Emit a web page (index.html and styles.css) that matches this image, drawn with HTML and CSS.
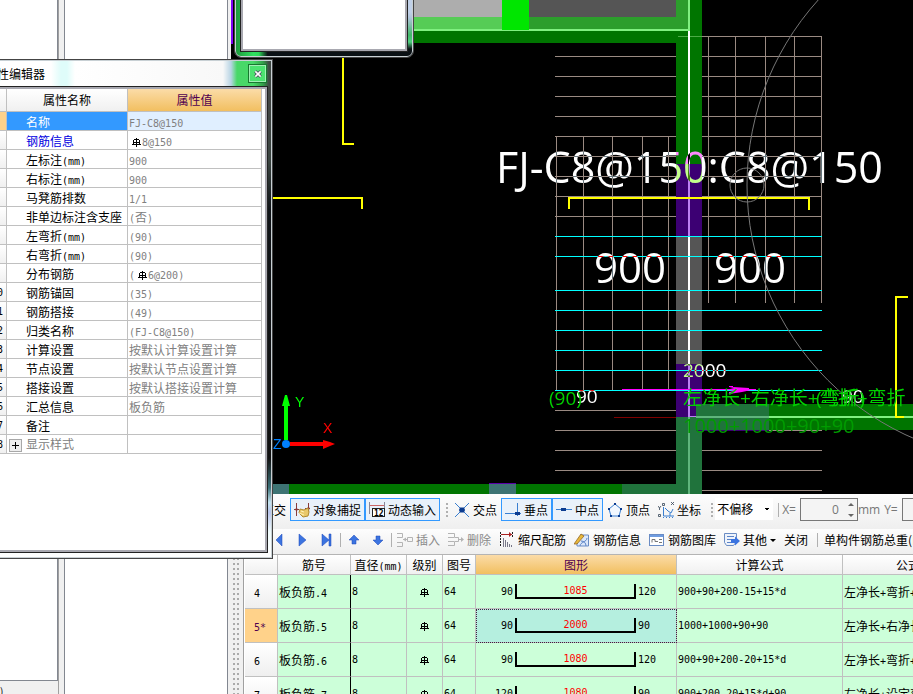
FILE: index.html
```html
<!DOCTYPE html>
<html lang="zh-CN">
<head>
    <meta charset="UTF-8">
    <meta name="viewport" content="width=device-width, initial-scale=1.0">
    <title>属性编辑器</title>
    <link rel="stylesheet" href="styles.css">
</head>
<body>
    <svg class="defs" aria-hidden="true">
        <symbol id="rebar" viewBox="0 0 9 9">
            <path d="M4.500 0v9M2 1.500h5M1.500 2v4M7.500 2v4M0 6.500h9M2 4.500h5" fill="none" stroke="currentColor" stroke-width="1"/>
        </symbol>
    </svg>
    <div class="app">
        <div class="left-pane">
            <div class="list-box"></div>
            <div class="pane-status">)</div>
        </div>
        <div class="mid-pane"></div>
        <div class="main">
            <div class="canvas">
                <svg viewBox="231 0 682 494" preserveAspectRatio="xMinYMin slice">
                    <rect x="231" width="682" height="494" fill="#000"/>
                    <rect x="231" y="0" width="2" height="44" fill="#7d00f5"/>
                    <!-- slab edges -->
                    <rect x="413" y="0" width="89" height="17" fill="#adadad"/>
                    <rect x="413" y="17" width="89" height="12" fill="#56cc56"/>
                    <rect x="529" y="0" width="147" height="17" fill="#555"/>
                    <rect x="529" y="17" width="147" height="12" fill="#2c9e2c"/>
                    <rect x="413" y="31" width="263" height="12" fill="#007500"/>
                    <!-- rebar grid -->
                    <path class="bar" d="M678 36.500H822M555 56.500H822M555 76.500H822M555 96.500H822M555 116.500H822M555 136.500H822M555 156.500H822M555 176.500H822M555 196.500H822M555 216.500H822M555 410.500H822M555 430.500H822M555 450.500H822M555 470.500H822M678 490.500H822"/>
                    <path class="bar" d="M556.500 136V390M583.500 136V390M612.500 136V390M642.500 136V390M668.500 136V390M708.500 36V303M735.500 36V303M765.500 36V303M794.500 36V303M821.500 36V303"/>
                    <path class="thin" d="M614 417.500H678" stroke="#800000"/>
                    <!-- beam axis column -->
                    <rect x="676" y="0" width="26" height="164" fill="#007500"/>
                    <rect x="676" y="0" width="12" height="29" fill="#2c9e2c"/>
                    <rect x="676" y="164" width="26" height="73" fill="#3c0073"/>
                    <rect x="676" y="237" width="26" height="127" fill="#555"/>
                    <rect x="676" y="364" width="26" height="53" fill="#3c0073"/>
                    <rect x="676" y="417" width="26" height="77" fill="#20733c"/>
                    <path class="thin" d="M678 36.500H702" stroke="#4cab46"/>
                    <rect x="696" y="404" width="73" height="26" fill="#20733c"/>
                    <rect x="696" y="430" width="73" height="1" fill="#3c0073"/>
                    <rect x="769" y="404" width="144" height="26" fill="#007500"/>
                    <rect x="413" y="29" width="276" height="2" fill="#80f080"/>
                    <rect x="502" y="0" width="27" height="30" fill="#00e600"/>
                    <rect x="688" y="0" width="2" height="31" fill="#80f080"/>
                    <rect x="688" y="31" width="2" height="133" fill="#fff"/>
                    <rect x="688" y="164" width="2" height="73" fill="#bc80f3"/>
                    <rect x="688" y="237" width="2" height="127" fill="#fff"/>
                    <rect x="688" y="364" width="2" height="53" fill="#bc80f3"/>
                    <rect x="690" y="416" width="6" height="1" fill="#bc80f3"/>
                    <rect x="688" y="417" width="2" height="77" fill="#5fb57c"/>
                    <rect x="696" y="416" width="73" height="2" fill="#5fb57c"/>
                    <rect x="769" y="416" width="144" height="2" fill="#80f080"/>
                    <path class="thin" d="M555 236.500H822M555 256.500H822M555 290.500H822M555 310.500H822M555 330.500H822M555 350.500H822M555 370.500H822M555 390.500H822" stroke="#0ff"/>
                    <!-- lower slab edge -->
                    <rect x="231" y="484" width="445" height="10" fill="#007500"/>
                    <rect x="231" y="484" width="58" height="10" fill="#3d7373"/>
                    <rect x="489" y="484" width="27" height="10" fill="#3d7373"/>
                    <rect x="489" y="483" width="27" height="1" fill="#5a00a8"/>
                    <rect x="622" y="484" width="54" height="10" fill="#20733c"/>
                    <path class="mark" d="M343 50V144H354M240 198H362V209M569 209V198H809V210M908 297H896V417H904"/>
                    <circle class="arc" cx="1023" cy="185" r="276"/>
                    <circle class="arc" cx="747" cy="185" r="17"/>
                    <path class="thin" d="M622 389.500H756" stroke="#f0f"/>
                    <path d="M729 386h4v1l16 1v1h7l-14 3-13 2v-2l5-1-4-1v-1l4-1-5-1z" fill="#f0f"/>
                    <g class="dims">
                        <text x="496" y="183" class="title">FJ-C8@150:C8@150</text>
                        <text x="594" y="283" class="big">900</text>
                        <text x="714" y="283" class="big">900</text>
                        <text x="683" y="377">2000</text>
                        <text x="576" y="403">90</text>
                        <text x="842" y="403">90</text>
                    </g>
                    <g class="notes">
                        <text x="549" y="405">(90)</text>
                        <text x="683" y="405">左净长+右净长+弯折+弯折</text>
                        <text x="816" y="405">(弯折)</text>
                        <text x="683" y="433" class="sum">1000+1000+90+90</text>
                    </g>
                    <!-- coordinate axes -->
                    <path d="M284 440V406h-2l3-11h2l3 11h-2v34z" fill="#0f0"/>
                    <path d="M290 442h33v-2l7 2 5 2-5 2-7 3v-3h-33z" fill="#f00"/>
                    <circle cx="286" cy="444" r="4" fill="#0080ff"/>
                    <text class="axis" x="295" y="407" fill="#0f0">Y</text>
                    <text class="axis" x="323" y="433" fill="#f00">X</text>
                    <text class="axis" x="273" y="449" fill="#0080ff">Z</text>
                </svg>
            </div>
            <div class="toolbar snap-bar">
                <button>正交</button>
                <button class="on">
                    <svg viewBox="0 0 16 16"><path d="M2.500 1v13M14.500 1v9M0 7.500h5M11 6.500h5" stroke="#8a3b3b" fill="none"/><path d="M1 7.500l1.500-2L4 7.500l-1.500 2zM13 6.500l1.500-2 1.500 2-1.500 2z" fill="#8a3b3b"/><path d="M6 7l4 1 4-2 1 4-1 4-5 1-4-4z" fill="#e9c86a" stroke="#b08a30"/><path d="M7 9l3 1M5 11l5 2" stroke="#fff2b8"/></svg>
                    对象捕捉
                </button>
                <button class="on">
                    <svg viewBox="0 0 16 16"><path d="M.5 0v12M15.500 0v6" stroke="#889"/><path d="M1 3.500h14" stroke="#c66"/><rect x="3.500" y="6.500" width="12" height="8" fill="#fff" stroke="#222"/><text x="5" y="14" font-size="8" font-family="DejaVu Sans Mono" font-weight="bold">12</text></svg>
                    动态输入
                </button>
                <span class="grip"></span>
                <button>
                    <svg viewBox="0 0 16 16"><path d="M1 1l5 5M15 1l-5 5M1 15l5-5M15 15l-5-5" stroke="#3a7fd0" fill="none"/><path d="M6 5.500h4L11 8l-1 2.500H6L5 8z" fill="#0c3c90"/></svg>
                    交点
                </button>
                <button class="on">
                    <svg viewBox="0 0 16 16"><path d="M12.500 1v13M0 11.500h16" stroke="#3a7fd0" fill="none"/><rect x="10" y="10" width="5" height="3" fill="#0c3c90"/></svg>
                    垂点
                </button>
                <button class="on">
                    <svg viewBox="0 0 16 16"><path d="M0 7.500h16" stroke="#3a7fd0"/><rect x="5" y="6" width="5" height="3" fill="#0c3c90"/></svg>
                    中点
                </button>
                <button>
                    <svg viewBox="0 0 16 16"><path d="M8 2l6 5-2 7H4L2 7z" fill="#f2f8ff" stroke="#3a7fd0"/><path d="M7 1h2v2H7zM1 6h2v2H1zM13 6h2v2h-2zM3 13h2v2H3zM11 13h2v2h-2z" fill="#0c3c90"/></svg>
                    顶点
                </button>
                <button>
                    <svg viewBox="0 0 16 16"><path d="M5.500 5v9H16M7 6l3 3 3 2 2-4M12 11v3" stroke="#3a7fd0" fill="none"/><path d="M4.500 1.500h2v2h-2zM13 0l3 3M16 0l-3 3M0 4l1.500 2L3 4M1.500 6v2M.5 12.500h2v2h-2z" fill="none" stroke="#345" stroke-width=".8"/><path d="M5 15.500h11" stroke="#3a7fd0" stroke-dasharray="1 2"/></svg>
                    坐标
                </button>
                <span class="grip"></span>
                <select aria-label="偏移方式">
                    <option>不偏移</option>
                </select>
                <span class="sep"></span>
                <label class="offset">X= <input type="text" value="0" disabled><span class="spin"></span></label>
                <span class="unit">mm</span>
                <label class="offset">Y= <input type="text" value="0" disabled><span class="spin"></span></label>
            </div>
            <div class="toolbar edit-bar">
                <button aria-label="上一条"><svg viewBox="0 0 16 16"><path d="M11 2v12L5 8z" fill="#3c74e0" stroke="#1b46b8" stroke-width=".5"/></svg></button>
                <button aria-label="下一条"><svg viewBox="0 0 16 16"><path d="M4 2v12l7-6z" fill="#3c74e0" stroke="#1b46b8" stroke-width=".5"/></svg></button>
                <button aria-label="最后一条"><svg viewBox="0 0 16 16"><path d="M3 2v12l7-6zM10 2h2v12h-2z" fill="#3c74e0" stroke="#1b46b8" stroke-width=".5"/></svg></button>
                <span class="sep"></span>
                <button aria-label="上移"><svg viewBox="0 0 16 16"><path d="M8 3l5 5h-3v4H6V8H3z" fill="#3c74e0" stroke="#1b46b8" stroke-width=".5"/></svg></button>
                <button aria-label="下移"><svg viewBox="0 0 16 16"><path d="M8 13L3 8h3V4h4v4h3z" fill="#3c74e0" stroke="#1b46b8" stroke-width=".5"/></svg></button>
                <span class="sep"></span>
                <button disabled>
                    <svg viewBox="0 0 16 16"><path d="M0 1.500h5.500v4H0M0 10.500h5.500v4H0M6 7.500h4M10.500 5.500h5v4h-5z" fill="none" stroke="#b4b4b4"/><path d="M6 7.500l3-2v4z" fill="#b4b4b4"/></svg>
                    插入
                </button>
                <button disabled>
                    <svg viewBox="0 0 16 16"><path d="M0 1.500h6.500v4h4v4h-4v4H0M0 5.500h6M0 9.500h6M10 7.500h5" fill="none" stroke="#b4b4b4"/><path d="M13 5l3 2.500-3 2.500z" fill="#b4b4b4"/></svg>
                    删除
                </button>
                <button>
                    <svg viewBox="0 0 16 16"><path d="M2 2.500h11" stroke="#a22"/><path d="M10 0l3 2.500L10 5z" fill="#a22"/><path d="M1.500 0v15M13.500 0v5" stroke="#222" stroke-dasharray="2 1"/><path d="M4.500 6v9M6.500 8v7M8.500 10v5M10.500 12v3M12.500 13v2" stroke="#778"/></svg>
                    缩尺配筋
                </button>
                <button>
                    <svg viewBox="0 0 16 16"><path d="M6 3h8.500v11H3V9" fill="#dce8fa" stroke="#6a8cc4"/><path d="M6 14c0-4 7-4 7-8M7 9c3 0 5 2 5 5" fill="none" stroke="#5b83c7"/><path d="M0 12L7 2l3 2-7 8z" fill="#e8b93c" stroke="#8a5a1a" stroke-width=".7"/></svg>
                    钢筋信息
                </button>
                <button>
                    <svg viewBox="0 0 16 16"><rect x=".5" y="2.500" width="14" height="11" fill="#fff" stroke="#6a8cc4"/><path d="M1 4h13" stroke="#6f9ce0" stroke-width="2"/><path d="M3 10.500V7.500h3v2h3M10 7.500h3M10 10.500h3" fill="none" stroke="#777"/></svg>
                    钢筋图库
                </button>
                <button>
                    <svg viewBox="0 0 16 16"><path d="M.5 1.500h12v8l-3 4h-7l-2-3z" fill="#eef3fb" stroke="#6a8cc4"/><path d="M3 4.500h7M3 7.500h5M3 10.500h4" stroke="#5b83c7"/><path d="M7 7h4V4.500l5 4.500-5 4.500V11H7z" fill="#3c74e0"/></svg>
                    其他<i class="caret"></i>
                </button>
                <button>关闭</button>
                <span class="sep wide"></span>
                <span class="total">单构件钢筋总重(kg)：</span>
            </div>
            <div class="detail">
                <div class="splitter"></div>
                <div class="grid-wrap">
                    <table class="grid">
                        <colgroup>
                            <col class="c-no"><col class="c-name"><col class="c-dia"><col class="c-grade"><col class="c-fig"><col class="c-shape"><col class="c-expr"><col class="c-desc">
                        </colgroup>
                        <thead>
                            <tr>
                                <th></th>
                                <th>筋号</th>
                                <th>直径<span class="en">(mm)</span></th>
                                <th>级别</th>
                                <th>图号</th>
                                <th class="hot">图形</th>
                                <th>计算公式</th>
                                <th>公式描述</th>
                            </tr>
                        </thead>
                        <tbody>
                            <tr>
                                <th><span class="en">4</span></th>
                                <td class="name">板负筋<span class="en">.4</span></td>
                                <td class="en">8</td>
                                <td class="mid"><svg class="rebar"><use href="#rebar"/></svg></td>
                                <td class="en">64</td>
                                <td><div class="shape en"><span>90</span><b>1085</b><span>120</span></div></td>
                                <td class="en">900+90+200-15+15*d</td>
                                <td>左净长<span class="en">+</span>弯折<span class="en">+</span>锚固</td>
                            </tr>
                            <tr class="current">
                                <th><span class="en">5*</span></th>
                                <td class="name">板负筋<span class="en">.5</span></td>
                                <td class="en">8</td>
                                <td class="mid"><svg class="rebar"><use href="#rebar"/></svg></td>
                                <td class="en">64</td>
                                <td class="focus"><div class="shape en"><span>90</span><b>2000</b><span>90</span></div></td>
                                <td class="en">1000+1000+90+90</td>
                                <td>左净长<span class="en">+</span>右净长<span class="en">+</span>弯折</td>
                            </tr>
                            <tr>
                                <th><span class="en">6</span></th>
                                <td class="name">板负筋<span class="en">.6</span></td>
                                <td class="en">8</td>
                                <td class="mid"><svg class="rebar"><use href="#rebar"/></svg></td>
                                <td class="en">64</td>
                                <td><div class="shape en"><span>90</span><b>1080</b><span>120</span></div></td>
                                <td class="en">900+90+200-20+15*d</td>
                                <td>左净长<span class="en">+</span>弯折<span class="en">+</span>锚固</td>
                            </tr>
                            <tr>
                                <th><span class="en">7</span></th>
                                <td class="name">板负筋<span class="en">.7</span></td>
                                <td class="en">8</td>
                                <td class="mid"><svg class="rebar"><use href="#rebar"/></svg></td>
                                <td class="en">64</td>
                                <td><div class="shape en"><span>120</span><b>1080</b><span>90</span></div></td>
                                <td class="en">900+200-20+15*d+90</td>
                                <td>左净长<span class="en">+</span>设定弯折</td>
                            </tr>
                        </tbody>
                    </table>
                </div>
            </div>
        </div>
    </div>

    <div class="window preview-window">
        <div class="window-body"></div>
    </div>

    <div class="window prop-window">
        <div class="title-bar">
            <span>属性编辑器</span>
            <button class="close" aria-label="关闭"><svg viewBox="0 0 9 9"><path d="M1.500 1.500l6 6M7.500 1.500l-6 6" stroke="#445" stroke-width="3.500"/><path d="M1.500 1.500l6 6M7.500 1.500l-6 6" stroke="#fff" stroke-width="1.800"/></svg></button>
        </div>
        <div class="window-body">
            <table class="props">
                <colgroup><col class="p-no"><col class="p-name"><col class="p-value"></colgroup>
                <thead>
                    <tr><th></th><th>属性名称</th><th class="hot">属性值</th></tr>
                </thead>
                <tbody>
                    <tr class="selected"><th>1</th><td>名称</td><td><span class="en">FJ-C8@150</span></td></tr>
                    <tr class="key"><th>2</th><td>钢筋信息</td><td><svg class="rebar"><use href="#rebar"/></svg><span class="en">8@150</span></td></tr>
                    <tr><th>3</th><td>左标注<span class="en">(mm)</span></td><td><span class="en">900</span></td></tr>
                    <tr><th>4</th><td>右标注<span class="en">(mm)</span></td><td><span class="en">900</span></td></tr>
                    <tr><th>5</th><td>马凳筋排数</td><td><span class="en">1/1</span></td></tr>
                    <tr><th>6</th><td>非单边标注含支座</td><td><span class="en">(</span>否<span class="en">)</span></td></tr>
                    <tr><th>7</th><td>左弯折<span class="en">(mm)</span></td><td><span class="en">(90)</span></td></tr>
                    <tr><th>8</th><td>右弯折<span class="en">(mm)</span></td><td><span class="en">(90)</span></td></tr>
                    <tr><th>9</th><td>分布钢筋</td><td><span class="en">(</span><svg class="rebar"><use href="#rebar"/></svg><span class="en">6@200)</span></td></tr>
                    <tr><th>10</th><td>钢筋锚固</td><td><span class="en">(35)</span></td></tr>
                    <tr><th>11</th><td>钢筋搭接</td><td><span class="en">(49)</span></td></tr>
                    <tr><th>12</th><td>归类名称</td><td><span class="en">(FJ-C8@150)</span></td></tr>
                    <tr><th>13</th><td>计算设置</td><td>按默认计算设置计算</td></tr>
                    <tr><th>14</th><td>节点设置</td><td>按默认节点设置计算</td></tr>
                    <tr><th>15</th><td>搭接设置</td><td>按默认搭接设置计算</td></tr>
                    <tr><th>16</th><td>汇总信息</td><td>板负筋</td></tr>
                    <tr><th>17</th><td>备注</td><td></td></tr>
                    <tr class="group"><th>18</th><td><button class="expand" aria-label="展开"></button>显示样式</td><td></td></tr>
                </tbody>
            </table>
        </div>
    </div>
</body>
</html>
```
FILE: styles.css
```css
* {
    box-sizing: border-box;
}
body {
    margin: 0;
    height: 100vh;
    overflow: hidden;
    background: #f0f0f0;
    color: #000;
    font-family: "Noto Sans CJK SC", sans-serif;
    font-size: 12px;
    line-height: 16px;
}
button, select, input {
    font: inherit;
    color: inherit;
}
.defs {
    position: absolute;
    width: 0;
    height: 0;
}
.en {
    font-family: "DejaVu Sans Mono", monospace;
    font-size: 10px;
}
span.en {
    line-height: 10px;
}
.rebar {
    width: 9px;
    height: 9px;
    color: #000;
}

/* docked panes */
.app {
    display: flex;
    height: 100%;
}
.left-pane {
    width: 59px;
    flex: none;
    display: flex;
    flex-direction: column;
    border-right: 1px solid #a0a0a0;
}
.list-box {
    flex: 1;
    background: #fff;
    border-right: 1px solid #828790;
    border-bottom: 1px solid #828790;
}
.pane-status {
    height: 13px;
    line-height: 20px;
    overflow: hidden;
    font-size: 10px;
}
.mid-pane {
    width: 164px;
    flex: none;
    margin: 0 3px 0 5px;
    background: #fff;
    border-left: 1px solid #828790;
    border-right: 1px solid #828790;
}
.main {
    flex: 1;
    min-width: 0;
    display: flex;
    flex-direction: column;
}

/* drawing area */
.canvas {
    flex: 1;
    min-height: 0;
    background: #000;
    overflow: hidden;
}
.canvas svg {
    display: block;
    width: 100%;
    height: 100%;
    isolation: isolate;
}
.bar, .thin {
    fill: none;
    stroke-width: 1;
}
.bar {
    stroke: #9a8a82;
}
.mark {
    fill: none;
    stroke: #ff0;
    stroke-width: 2;
}
.arc {
    fill: none;
    stroke: #777;
    stroke-width: 1;
}
.dims, .notes {
    font-family: "Open Sans", "Noto Sans CJK SC", sans-serif;
    font-size: 19px;
}
.dims {
    fill: #fff;
    mix-blend-mode: difference;
}
.dims .big {
    font-size: 42px;
}
.dims .title {
    font-size: 43px;
}
.notes {
    fill: #00d000;
}
.notes .sum {
    fill: #009c00;
    font-size: 20px;
}
.axis {
    font-family: "Liberation Sans", sans-serif;
    font-size: 14px;
}

/* toolbars */
.toolbar {
    flex: none;
    display: flex;
    overflow: hidden;
    white-space: nowrap;
    background: linear-gradient(#fdfdfd, #efefef);
}
.snap-bar {
    height: 35px;
    padding: 4px 0 0 27px;
    align-items: flex-start;
}
.edit-bar {
    height: 26px;
    padding: 0 0 3px 36px;
    align-items: center;
    border-bottom: 1px solid #b4b4b4;
}
.toolbar button {
    flex: none;
    display: flex;
    align-items: center;
    gap: 3px;
    height: 23px;
    padding: 0 3px;
    border: 1px solid transparent;
    background: none;
}
.toolbar button.on {
    border-color: #3399ff;
    background: #e9f1fa;
}
.toolbar button:disabled {
    color: #8a8a8a;
}
.toolbar button svg {
    width: 16px;
    height: 16px;
    flex: none;
}
.grip {
    flex: none;
    width: 2px;
    height: 14px;
    margin: 5px 2px 0 6px;
    background: repeating-linear-gradient(#b0b0b0 0 2px, transparent 2px 4px);
}
.sep {
    flex: none;
    width: 1px;
    height: 14px;
    margin: 0 1px;
    background: #b0b0b0;
}
.snap-bar .sep {
    margin: 5px 3px 0 5px;
}
.sep.wide {
    margin: 0 5px;
}
.snap-bar select {
    flex: none;
    width: 58px;
    height: 22px;
    padding: 0 0 0 2px;
    border: 0;
    border-radius: 0;
    appearance: none;
    background: #fff conic-gradient(from -45deg at 50% 3px, #000 90deg, transparent 0) right 3px center / 6px 3px no-repeat;
}
.offset, .unit {
    flex: none;
    display: flex;
    align-items: center;
    gap: 4px;
    height: 23px;
    color: #777;
    font-family: "Open Sans", sans-serif;
}
.unit {
    margin: 0 4px 0 0;
}
.offset input {
    width: 58px;
    height: 23px;
    padding: 0 18px 0 4px;
    border: 1px solid #777;
    background: #f4f4f4;
    text-align: right;
}
.spin {
    display: flex;
    flex-direction: column;
    justify-content: space-between;
    width: 6px;
    height: 14px;
    margin: 0 4px 0 -14px;
}
.spin::before, .spin::after {
    content: "";
    border: 3px solid transparent;
    border-top: 0;
    border-bottom: 3px solid #666;
}
.spin::after {
    border-bottom: 0;
    border-top: 3px solid #666;
}
.caret {
    border: 3px solid transparent;
    border-top-color: #000;
    border-bottom: 0;
}
.total {
    padding-left: 1px;
}

/* rebar detail grid */
.detail {
    flex: none;
    display: flex;
    height: 139px;
}
.splitter {
    flex: none;
    width: 13px;
    border-right: 1px solid #a0a0a0;
    background-image: radial-gradient(circle at 3px 1px, #aaa 1px, transparent 1px), radial-gradient(circle at 7px 1px, #aaa 1px, transparent 1px);
    background-size: 12px 5px;
    background-position: 0 3px;
}
.grid-wrap {
    flex: 1;
    min-width: 0;
    overflow: hidden;
    padding-left: 1px;
    background: #fff;
}
table {
    table-layout: fixed;
    border-spacing: 0;
}
th, td {
    padding: 0 0 0 2px;
    font-weight: normal;
    text-align: left;
    white-space: nowrap;
    overflow: hidden;
    border-right: 1px solid #c0c0c0;
    border-bottom: 1px solid #c0c0c0;
}
thead th {
    padding: 0;
    text-align: center;
    background: linear-gradient(#fff, #f0f0f0);
}
thead th.hot {
    color: #500050;
    background: linear-gradient(#fbdca8, #f2bf60);
}
.grid {
    width: 753px;
}
.c-no { width: 33px; }
.c-name { width: 73px; }
.c-dia { width: 56px; }
.c-grade { width: 36px; }
.c-fig { width: 33px; }
.c-shape { width: 201px; }
.c-expr { width: 166px; }
.c-desc { width: 155px; }
.grid thead th {
    height: 20px;
}
.grid tbody th, .grid tbody td {
    height: 34px;
}
.grid tbody th {
    padding-left: 9px;
    background: linear-gradient(#fff, #efefef);
}
.grid tbody td {
    padding-left: 1px;
    background: #ccffd9;
}
.grid tbody td.name {
    border-right-color: #000;
}
.grid tbody .mid {
    padding: 0;
    text-align: center;
}
.grid .current th {
    color: #500050;
    background: #ffd28a;
}
.grid tbody td.focus {
    background: #b5efdf;
    outline: 1px dotted #402040;
    outline-offset: -1px;
}
.shape {
    display: flex;
    align-items: center;
}
.shape span {
    width: 36px;
    text-align: right;
}
.shape span:last-child {
    text-align: left;
}
.shape b {
    width: 121px;
    height: 15px;
    margin: 0 2px;
    line-height: 14px;
    font-weight: normal;
    text-align: center;
    color: #f00;
    border: 2px solid #000;
    border-top: 0;
}

/* floating windows */
.window {
    position: absolute;
    display: flex;
    flex-direction: column;
    border: 1px solid #c8d0d4;
    outline: 1px solid #444;
}
.window-body {
    flex: 1;
    background: #fff;
    border: 2px solid #a8a8b0;
    outline: 1px solid #222;
}
.preview-window {
    left: 235px;
    top: -120px;
    width: 178px;
    height: 177px;
    padding: 5px;
    border-radius: 6px;
    background: linear-gradient(90deg, #1c9a3c, #30e060 10%, #2cd858 13%, transparent 18%),
        linear-gradient(#c0d0e8 75%, #b0c4dc 78%, #40b868 88%, #50d080 92%, #0a1014 96%);
}
.prop-window {
    left: -24px;
    top: 60px;
    width: 296px;
    height: 498px;
    padding: 0 4px 5px 0;
    background: linear-gradient(#444 0, #3a4440 20%, #101418 30%, #111 80%, #3a7078 86%, #c4e4f0 89%, #b8c4ec 91%, #f0fcfc 95%, #fff);
}
.prop-window > .window-body {
    border-left: 0;
}
.title-bar {
    display: flex;
    align-items: center;
    justify-content: space-between;
    height: 26px;
    margin-right: -4px;
    padding: 0 5px 1px 8px;
    background: linear-gradient(90deg, #fff 74px, #dffcfa 84px 90px, #fff 98px, #f8f8f8 246px, #b8d4e4 254px, #48d868 260px 276px, #30a048 286px, #404844 292px);
}
.close {
    display: flex;
    align-items: center;
    justify-content: center;
    width: 17px;
    height: 17px;
    padding: 0;
    border: 1px solid #a0f0b4;
    outline: 1px solid #187830;
    background: #4ce270;
}
.close svg {
    width: 8px;
    height: 8px;
}
.props {
    width: 285px;
}
.p-no { width: 30px; }
.p-name { width: 121px; }
.p-value { width: 134px; }
.props thead th {
    height: 23px;
}
.props tbody th, .props tbody td {
    height: 19px;
    line-height: 15px;
}
.props tbody th {
    padding-left: 14px;
    font-family: "DejaVu Sans Mono", monospace;
    font-size: 10px;
    background: linear-gradient(#fff, #f0f0f0);
}
.props td:nth-child(2) {
    padding-left: 19px;
}
.props td:nth-child(3) {
    padding-left: 1px;
    color: #808080;
}
.props .rebar {
    margin: 0 1px 0 3px;
    vertical-align: -1px;
}
.selected td:nth-child(2) {
    color: #fff;
    background: #3399ff;
}
.selected td:nth-child(3) {
    background: #e0efff;
}
.props .selected th {
    background: #ffd28a;
}
.key td:nth-child(2) {
    color: #0000e0;
}
.group td:nth-child(2) {
    color: #808080;
    padding-left: 2px;
}
.expand {
    width: 13px;
    height: 13px;
    margin-right: 4px;
    padding: 0;
    vertical-align: -2px;
    border: 1px solid #a8a8a8;
    background: linear-gradient(#000, #000) center / 7px 1px no-repeat, linear-gradient(#000, #000) center / 1px 7px no-repeat, #eee;
}
```
